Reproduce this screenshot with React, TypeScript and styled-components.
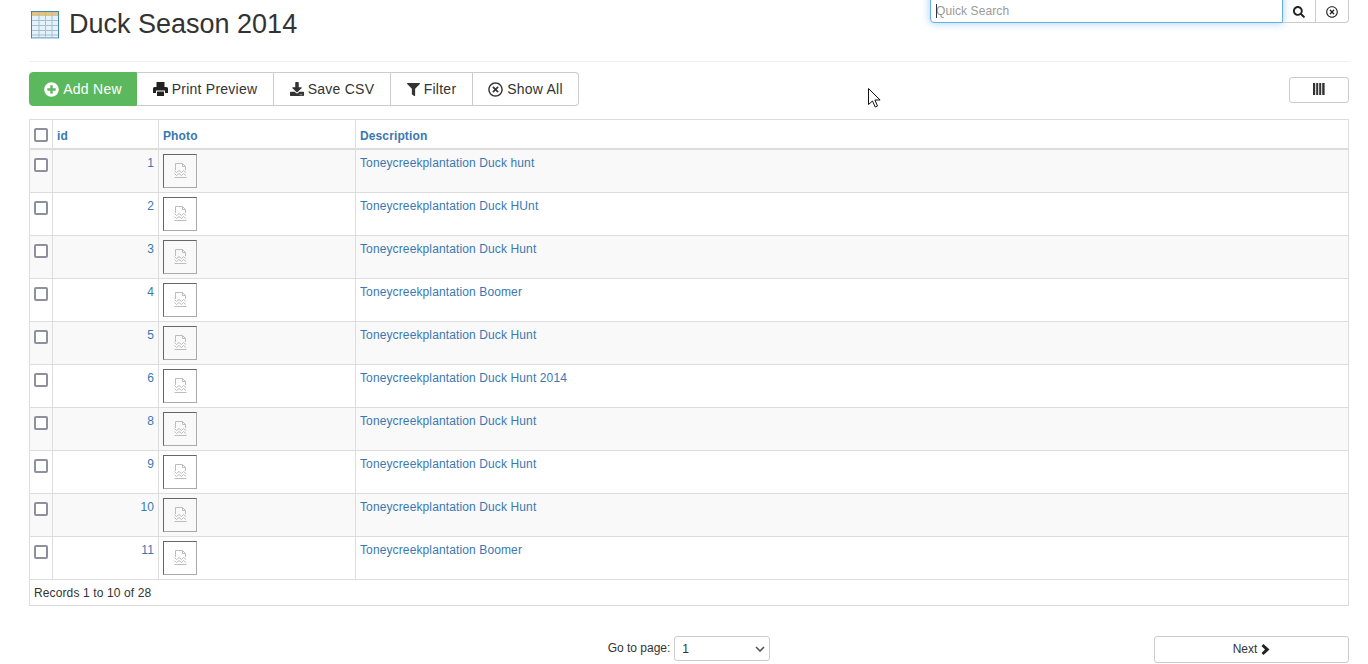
import styled, { createGlobalStyle } from 'styled-components';
import { FaDownload, FaFilter, FaSearch, FaPlusCircle, FaRegTimesCircle } from 'react-icons/fa';

const Global = createGlobalStyle`
  html, body { margin: 0; padding: 0; background: #fff; overflow: hidden; }
  body { font-family: "Liberation Sans", Arial, sans-serif; color: #333; }
`;

// --------------  Elements
const Page = styled.div`
  position: relative;
  width: 1368px;
  height: 664px;
  box-sizing: border-box;
  padding: 0 19px 0 29px;
  overflow: hidden;
`;
const Header = styled.header`
  display: flex;
  justify-content: space-between;
  align-items: flex-start;
  height: 61px;
  border-bottom: 1px solid #eee;
`;
const TitleWrap = styled.div`
  display: flex;
  align-items: center;
  gap: 10px;
  padding: 11px 0 0 2px;
`;
const Title = styled.h1`
  margin: -2px 0 0;
  font-size: 27px;
  line-height: 30px;
  font-weight: 400;
  color: #333;
`;
const SearchGroup = styled.div`
  position: relative;
  display: flex;
  margin-top: -11px;
`;
const SearchInput = styled.input`
  width: 353px;
  height: 34px;
  box-sizing: border-box;
  padding: 10px 5px 0;
  border: 1px solid #66afe9;
  border-radius: 4px 0 0 4px;
  font: 12px "Liberation Sans", Arial, sans-serif;
  outline: none;
  box-shadow: 0 0 8px rgba(102, 175, 233, 0.6);
  &::placeholder { color: #999; letter-spacing: 0.1px; }
`;
const Caret = styled.span`
  position: absolute;
  left: 6px;
  top: 15px;
  width: 1px;
  height: 14px;
  background: #333;
`;
const SearchButton = styled.div<{ $last?: boolean }>`
  width: 33px;
  height: 34px;
  box-sizing: border-box;
  padding-top: 11px;
  display: flex;
  align-items: center;
  justify-content: center;
  border: 1px solid #ccc;
  border-left: none;
  border-radius: ${p => (p.$last ? '0 4px 4px 0' : '0')};
  color: #222;
  font-size: 12px;
`;
const ToolRow = styled.div`
  display: flex;
  justify-content: space-between;
  align-items: flex-start;
  margin-top: 10px;
`;
const ButtonGroup = styled.div`
  display: flex;
`;
const ToolButton = styled.div<{ $primary?: boolean; $w: number }>`
  width: ${p => p.$w}px;
  height: 34px;
  box-sizing: border-box;
  display: flex;
  align-items: center;
  justify-content: center;
  gap: 4px;
  font-size: 14px;
  letter-spacing: 0.25px;
  color: ${p => (p.$primary ? '#fff' : '#333')};
  background: ${p => (p.$primary ? '#5cb85c' : '#fff')};
  border: 1px solid ${p => (p.$primary ? '#5cb85c' : '#ccc')};
  border-left: ${p => (p.$primary ? '1px solid #5cb85c' : 'none')};
  &:first-child { border-radius: 4px 0 0 4px; }
  &:last-child { border-radius: 0 4px 4px 0; }
`;
const ColumnsButton = styled.div`
  width: 60px;
  height: 26px;
  margin-top: 5px;
  box-sizing: border-box;
  display: flex;
  align-items: center;
  justify-content: center;
  padding-bottom: 3px;
  border: 1px solid #ccc;
  border-radius: 3px;
`;
const Table = styled.table`
  width: 100%;
  margin-top: 13px;
  border-collapse: collapse;
  table-layout: fixed;
  font-size: 12px;
  letter-spacing: 0.12px;
  border: 1px solid #ddd;
`;
const Th = styled.th<{ $w?: number }>`
  ${p => (p.$w ? `width: ${p.$w}px;` : '')}
  height: 29px;
  box-sizing: border-box;
  padding: 6px 4px 2px;
  text-align: left;
  vertical-align: middle;
  font-weight: 700;
  color: #3a78b2;
  border: 1px solid #ddd;
  border-bottom: 2px solid #ddd;
`;
const Row = styled.tr<{ $odd: boolean }>`
  height: 43px;
  background: ${p => (p.$odd ? '#f9f9f9' : '#fff')};
`;
const Td = styled.td<{ $right?: boolean }>`
  box-sizing: border-box;
  padding: 4px;
  vertical-align: top;
  color: #3a78b2;
  text-align: ${p => (p.$right ? 'right' : 'left')};
  border: 1px solid #ddd;
  line-height: 19px;
`;
const FooterCell = styled.td`
  height: 26px;
  box-sizing: border-box;
  padding: 5px 4px 3px;
  color: #333;
  border: 1px solid #ddd;
`;
const Check = styled.input.attrs({ type: 'checkbox' })`
  appearance: none;
  display: block;
  width: 14px;
  height: 14px;
  margin: 4px 0 0 0;
  box-sizing: border-box;
  background: #fff;
  border: 2px solid #8f8f9d;
  border-radius: 2px;
`;
const HeadCheck = styled(Check)`
  margin: -1px 0 0;
`;
const Thumb = styled.div`
  width: 34px;
  height: 34px;
  box-sizing: border-box;
  display: flex;
  align-items: center;
  justify-content: center;
  border: 1px solid;
  border-color: #666 #aaa #aaa #666;
`;
const Pager = styled.div`
  display: grid;
  grid-template-columns: 1fr auto 1fr;
  margin-top: 30px;
  font-size: 12px;
`;
const PageJump = styled.div`
  grid-column: 2;
  display: flex;
  align-items: flex-start;
  gap: 4px;
  height: 26px;
`;
const JumpLabel = styled.span`
  line-height: 24px;
`;
const PageSelect = styled.div`
  width: 96px;
  height: 25px;
  box-sizing: border-box;
  display: flex;
  align-items: center;
  justify-content: space-between;
  padding: 1px 4px 0 7px;
  border: 1px solid #ccc;
  border-radius: 3px;
`;
const NextButton = styled.div`
  grid-column: 3;
  justify-self: end;
  width: 195px;
  height: 27px;
  box-sizing: border-box;
  display: flex;
  align-items: center;
  justify-content: center;
  gap: 4px;
  border: 1px solid #ccc;
  border-radius: 3px;
`;
const Cursor = styled.svg`
  position: absolute;
  left: 868px;
  top: 88px;
`;

// --------------  Drawings
const TableIcon = () => (
  <svg width="28" height="28" viewBox="0 0 28 28">
    <rect x="0.5" y="0.5" width="27" height="26.5" fill="#e6f1fa" stroke="#3f86ad" strokeWidth="1" />
    <rect x="1" y="1" width="26" height="4" fill="#e2c482" />
    <path d="M1 9.5h26M1 14.5h26M1 19.5h26M1 24h26M8 1v26M14.5 1v26M21 1v26" stroke="#a3bfd2" strokeWidth="1" fill="none" />
    <path d="M1 27.5h27" stroke="#bcd6e8" strokeWidth="1" fill="none" />
  </svg>
);

const PrintIcon = () => (
  <svg width="15" height="14" viewBox="0 0 15 14" fill="#222">
    <path d="M3.5 0h8v5h-8z" />
    <path d="M1.5 5h12A1.5 1.5 0 0 1 15 6.5V11h-3V8.5H3V11H0V6.5A1.5 1.5 0 0 1 1.5 5z" />
    <path d="M4 9.5h7V14H4z" />
  </svg>
);

const BrokenImage = () => (
  <svg width="13" height="15" viewBox="0 0 13 15" fill="none" stroke="#bdbdbd" strokeWidth="1">
    <path d="M1.5 7V.5h7l3 3V7" />
    <path d="M8.5.5v3h3" />
    <path d="M.5 7.5l2 2 2.5-2 2.5 2 2-2 2.5 2" />
    <path d="M.5 10.5l2 2 2.5-2 2.5 2 2-2 2.5 2" />
    <path d="M.5 14.5h12" />
  </svg>
);

const ColumnsIcon = () => (
  <svg width="12" height="12" viewBox="0 0 12 12" fill="#333">
    <rect x="0" y="0" width="2.2" height="12" />
    <rect x="3.2" y="0" width="2" height="12" />
    <rect x="6.2" y="0" width="2" height="12" />
    <rect x="9.2" y="0" width="2.4" height="12" />
  </svg>
);

const Chevron = () => (
  <svg width="10" height="6" viewBox="0 0 10 6" fill="none" stroke="#555" strokeWidth="1.6">
    <path d="M1 1l4 4 4-4" />
  </svg>
);

const NextChevron = () => (
  <svg width="9" height="11" viewBox="0 0 9 11" fill="#222">
    <path d="M2.5 0L8.5 5.5 2.5 11 .5 9 4 5.5 .5 2z" />
  </svg>
);

// --------------  Functions
const rows = [
  { id: 1, text: 'Toneycreekplantation Duck hunt' },
  { id: 2, text: 'Toneycreekplantation Duck HUnt' },
  { id: 3, text: 'Toneycreekplantation Duck Hunt' },
  { id: 4, text: 'Toneycreekplantation Boomer' },
  { id: 5, text: 'Toneycreekplantation Duck Hunt' },
  { id: 6, text: 'Toneycreekplantation Duck Hunt 2014' },
  { id: 8, text: 'Toneycreekplantation Duck Hunt' },
  { id: 9, text: 'Toneycreekplantation Duck Hunt' },
  { id: 10, text: 'Toneycreekplantation Duck Hunt' },
  { id: 11, text: 'Toneycreekplantation Boomer' },
];

export default function App() {
  return (
    <Page>
      <Global />
      <Header>
        <TitleWrap>
          <TableIcon />
          <Title>Duck Season 2014</Title>
        </TitleWrap>
        <SearchGroup>
          <SearchInput placeholder="Quick Search" />
          <Caret />
          <SearchButton><FaSearch size={12} /></SearchButton>
          <SearchButton $last><FaRegTimesCircle size={12} /></SearchButton>
        </SearchGroup>
      </Header>
      <ToolRow>
        <ButtonGroup>
          <ToolButton $primary $w={108}><FaPlusCircle size={15} />Add New</ToolButton>
          <ToolButton $w={137}><PrintIcon />Print Preview</ToolButton>
          <ToolButton $w={117}><FaDownload size={14} />Save CSV</ToolButton>
          <ToolButton $w={82}><FaFilter size={13} />Filter</ToolButton>
          <ToolButton $w={106}><FaRegTimesCircle size={15} />Show All</ToolButton>
        </ButtonGroup>
        <ColumnsButton><ColumnsIcon /></ColumnsButton>
      </ToolRow>
      <Table>
        <thead>
          <tr>
            <Th $w={23}><HeadCheck /></Th>
            <Th $w={106}>id</Th>
            <Th $w={197}>Photo</Th>
            <Th>Description</Th>
          </tr>
        </thead>
        <tbody>
          {rows.map((row, i) => (
            <Row key={row.id} $odd={i % 2 === 0}>
              <Td><Check /></Td>
              <Td $right>{row.id}</Td>
              <Td><Thumb><BrokenImage /></Thumb></Td>
              <Td>{row.text}</Td>
            </Row>
          ))}
          <tr>
            <FooterCell colSpan={4}>Records 1 to 10 of 28</FooterCell>
          </tr>
        </tbody>
      </Table>
      <Pager>
        <PageJump>
          <JumpLabel>Go to page:</JumpLabel>
          <PageSelect>1<Chevron /></PageSelect>
        </PageJump>
        <NextButton>Next <NextChevron /></NextButton>
      </Pager>
      <Cursor width="13" height="20" viewBox="0 0 13 20">
        <path d="M.5.5v16l4-3.5 2.7 6 2.3-1-2.6-6h5.2z" fill="#fff" stroke="#111" strokeWidth="1" />
      </Cursor>
    </Page>
  );
}
